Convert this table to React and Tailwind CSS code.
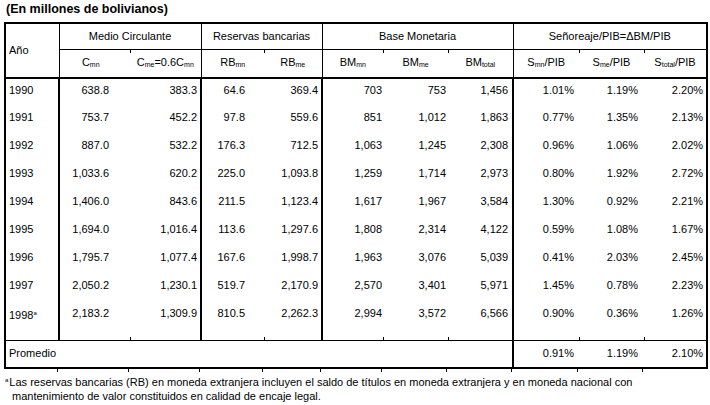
const rows = [
  ["1990", "638.8", "383.3", "64.6", "369.4", "703", "753", "1,456", "1.01%", "1.19%", "2.20%"],
  ["1991", "753.7", "452.2", "97.8", "559.6", "851", "1,012", "1,863", "0.77%", "1.35%", "2.13%"],
  ["1992", "887.0", "532.2", "176.3", "712.5", "1,063", "1,245", "2,308", "0.96%", "1.06%", "2.02%"],
  ["1993", "1,033.6", "620.2", "225.0", "1,093.8", "1,259", "1,714", "2,973", "0.80%", "1.92%", "2.72%"],
  ["1994", "1,406.0", "843.6", "211.5", "1,123.4", "1,617", "1,967", "3,584", "1.30%", "0.92%", "2.21%"],
  ["1995", "1,694.0", "1,016.4", "113.6", "1,297.6", "1,808", "2,314", "4,122", "0.59%", "1.08%", "1.67%"],
  ["1996", "1,795.7", "1,077.4", "167.6", "1,998.7", "1,963", "3,076", "5,039", "0.41%", "2.03%", "2.45%"],
  ["1997", "2,050.2", "1,230.1", "519.7", "2,170.9", "2,570", "3,401", "5,971", "1.45%", "0.78%", "2.23%"],
  ["1998", "2,183.2", "1,309.9", "810.5", "2,262.3", "2,994", "3,572", "6,566", "0.90%", "0.36%", "1.26%"],
];

// per column: right padding + whether a thick group line follows
const cellCls = [
  "text-left pl-[3px] border-r-2 border-black",
  "text-right pr-[21px]",
  "text-right pr-[3px] border-r-2 border-black",
  "text-right pr-[19px]",
  "text-right pr-[3px] border-r-2 border-black",
  "text-right pr-[1px]",
  "text-right pr-[2px]",
  "text-right pr-[4px] border-r-2 border-black",
  "text-right pr-[5px]",
  "text-right pr-[6px]",
  "text-right pr-[3px]",
];

const widths = ["w-[54px]", "w-[71px]", "w-[71px]", "w-[63px]", "w-[58px]", "w-[61px]", "w-[65px]", "w-[65px]", "w-[66px]", "w-[65px]", "w-[63px]"];

// columns that sit right of a hidden sub-column line: they show a small mark
const tickCols = [2, 4, 6, 7, 9, 10];
const tickTop = "bg-[linear-gradient(#000,#000)] bg-no-repeat bg-[length:1px_3px] bg-[position:0_0]";
const tickBottom = "bg-[linear-gradient(#000,#000)] bg-no-repeat bg-[length:1px_3px] bg-[position:0_100%]";

function Sub({ children }) {
  return <span className="text-[7px] align-[-1px]">{children}</span>;
}

export default function App() {
  const last = rows.length - 1;

  return (
    <div className="w-[710px] h-[405px] bg-white pt-[2px] text-black font-['Liberation_Sans',Arial,sans-serif]">
      <div className="pl-[6px] text-[12.5px] font-bold leading-[15px]">(En millones de bolivianos)</div>

      <div className="ml-[4px] mt-[5px] w-[702px]">
        <table className="w-full table-fixed border-collapse border-2 border-black text-[11px] leading-[13px]">
          <colgroup>
            {widths.map((w, i) => (
              <col key={i} className={w} />
            ))}
          </colgroup>
          <thead>
            <tr className="h-[26px]">
              <td rowSpan={2} className="pl-[3px] border-r border-black align-middle">Año</td>
              <td colSpan={2} className="text-center border-r border-b border-black">Medio Circulante</td>
              <td colSpan={2} className="text-center border-r border-b border-black">Reservas bancarias</td>
              <td colSpan={3} className="text-center border-r border-b border-black">Base Monetaria</td>
              <td colSpan={3} className="text-center border-b border-black">Señoreaje/PIB=ΔBM/PIB</td>
            </tr>
            <tr className="h-[29px] border-b-2 border-black">
              <td className="text-center pl-[2px] pr-[10px]">C<Sub>mn</Sub></td>
              <td className={`text-center border-r border-black ${tickTop}`}>C<Sub>me</Sub>=0.6C<Sub>mn</Sub></td>
              <td className="text-center">RB<Sub>mn</Sub></td>
              <td className={`text-center border-r border-black ${tickTop}`}>RB<Sub>me</Sub></td>
              <td className="text-center">BM<Sub>mn</Sub></td>
              <td className={`text-center ${tickTop}`}>BM<Sub>me</Sub></td>
              <td className={`text-center border-r border-black ${tickTop}`}>BM<Sub>total</Sub></td>
              <td className="text-center">S<Sub>mn</Sub>/PIB</td>
              <td className={`text-center ${tickTop}`}>S<Sub>me</Sub>/PIB</td>
              <td className={`text-center ${tickTop}`}>S<Sub>total</Sub>/PIB</td>
            </tr>
          </thead>
          <tbody>
            {rows.map((r, ri) => (
              <tr key={r[0]} className={ri === last ? "h-[38px]" : "h-[28px]"}>
                {r.map((v, ci) => (
                  <td
                    key={ci}
                    className={`align-top pt-[5px] ${cellCls[ci]} ${ri === last && tickCols.includes(ci) ? tickBottom : ""}`}
                  >
                    {v}
                    {ci === 0 && ri === last && <span className="text-[6px] align-[4px]">a</span>}
                  </td>
                ))}
              </tr>
            ))}
            <tr className="h-[28px] border-t border-black">
              <td colSpan={8} className="pl-[3px] border-r-2 border-black">Promedio</td>
              <td className="text-right pr-[5px]">0.91%</td>
              <td className="text-right pr-[6px]">1.19%</td>
              <td className="text-right pr-[3px]">2.10%</td>
            </tr>
          </tbody>
        </table>

        {/* marks under the bottom rule, one per column line */}
        <div className="flex h-[3px]">
          {widths.map((w, i) => (
            <div key={i} className={`${w} shrink-0 ${i < widths.length - 1 ? "border-r border-black" : ""}`} />
          ))}
        </div>
      </div>

      <div className="mt-[1px] pl-[5px] text-[11px] leading-[14px]">
        <div>
          <span className="text-[6px] align-[4px] mr-[1px]">a</span>Las reservas bancarias (RB) en moneda extranjera incluyen el saldo de títulos en moneda extranjera y en moneda nacional con
        </div>
        <div className="pl-[7px]">mantenimiento de valor constituidos en calidad de encaje legal.</div>
      </div>
    </div>
  );
}
